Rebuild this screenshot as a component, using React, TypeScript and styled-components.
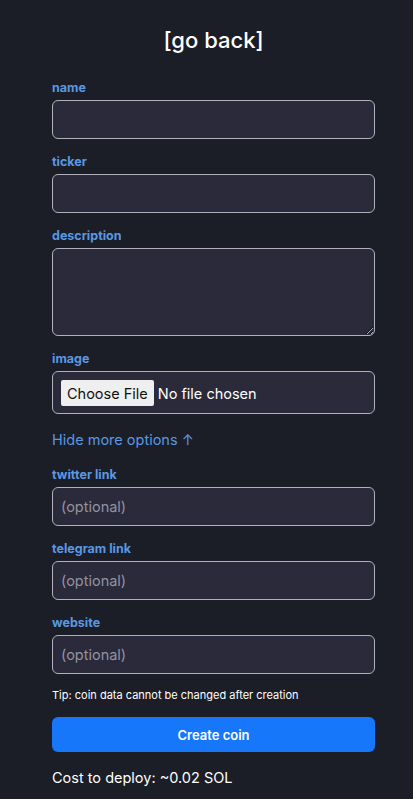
import React from "react";
import styled, { createGlobalStyle } from "styled-components";

const GlobalStyle = createGlobalStyle`
  html, body {
    margin: 0;
    padding: 0;
    background: #1b1d27;
    font-family: Inter, "Noto Sans", sans-serif;
  }
`;

const Page = styled.div`
  min-height: 100vh;
  padding: 26px 38px 16px 52px;
  box-sizing: border-box;
  color: #ffffff;
`;

const Form = styled.form`
  width: 323px;
  display: flex;
  flex-direction: column;
`;

const BackLink = styled.a`
  align-self: center;
  font-size: 22px;
  line-height: 28px;
  font-weight: 500;
  color: #ffffff;
  text-decoration: none;
  margin-bottom: 27px;
  cursor: pointer;
`;

const Field = styled.div<{ $space?: number }>`
  display: flex;
  flex-direction: column;
  gap: 5px;
  margin-bottom: ${(p) => (p.$space ?? 16)}px;
`;

const Label = styled.label`
  font-size: 12.5px;
  line-height: 14px;
  font-weight: 700;
  color: #5a98e2;
`;

const boxStyle = `
  box-sizing: border-box;
  width: 100%;
  background: #2a2a3b;
  border: 1.5px solid #b0b1bb;
  border-radius: 6px;
  color: #ffffff;
  font-family: Inter, "Noto Sans", sans-serif;
  outline: none;
`;

const Input = styled.input`
  ${boxStyle}
  height: 39px;
  padding: 0 8px;
  font-size: 14.5px;
  &::placeholder {
    color: #9293a0;
  }
`;

const TextArea = styled.textarea`
  ${boxStyle}
  height: 88px;
  padding: 8px;
  font-size: 14.5px;
`;

const FileInput = styled.input`
  ${boxStyle}
  height: 43px;
  padding: 8px;
  font-size: 14.5px;
  &::file-selector-button {
    font-family: Inter, "Noto Sans", sans-serif;
    font-size: 14.5px;
    height: 26px;
    padding: 0 6px;
    margin-right: 4px;
    background: #efefef;
    color: #111111;
    border: none;
    border-radius: 2px;
  }
`;

const Toggle = styled.button`
  align-self: flex-start;
  background: none;
  border: none;
  padding: 0;
  margin: 17px 0 19px;
  font-family: Inter, "Noto Sans", sans-serif;
  font-size: 14.5px;
  line-height: 18px;
  color: #5a98e2;
  cursor: pointer;
`;

const Tip = styled.p`
  margin: 0 0 15px;
  font-size: 11px;
  line-height: 14px;
  color: #ffffff;
`;

const Submit = styled.button`
  height: 35px;
  border: none;
  border-radius: 6px;
  background: #1677fb;
  color: #ffffff;
  font-family: Inter, "Noto Sans", sans-serif;
  font-size: 13px;
  font-weight: 600;
  cursor: pointer;
`;

const Cost = styled.p`
  margin: 16px 0 0;
  font-size: 14.5px;
  line-height: 20px;
  color: #ffffff;
`;

const fields = [
  { id: "twitter", label: "twitter link" },
  { id: "telegram", label: "telegram link" },
  { id: "website", label: "website" },
];

export default function App() {
  return (
    <>
      <GlobalStyle />
      <Page>
        <Form onSubmit={(e) => e.preventDefault()}>
          <BackLink>[go back]</BackLink>
          <Field>
            <Label htmlFor="name">name</Label>
            <Input id="name" type="text" />
          </Field>
          <Field>
            <Label htmlFor="ticker">ticker</Label>
            <Input id="ticker" type="text" />
          </Field>
          <Field>
            <Label htmlFor="description">description</Label>
            <TextArea id="description" />
          </Field>
          <Field $space={0}>
            <Label htmlFor="image">image</Label>
            <FileInput id="image" type="file" />
          </Field>
          <Toggle type="button">Hide more options ↑</Toggle>
          {fields.map((f, i) => (
            <Field key={f.id} $space={i === fields.length - 1 ? 14 : 16}>
              <Label htmlFor={f.id}>{f.label}</Label>
              <Input id={f.id} type="text" placeholder="(optional)" />
            </Field>
          ))}
          <Tip>Tip: coin data cannot be changed after creation</Tip>
          <Submit type="submit">Create coin</Submit>
          <Cost>Cost to deploy: ~0.02 SOL</Cost>
        </Form>
      </Page>
    </>
  );
}
